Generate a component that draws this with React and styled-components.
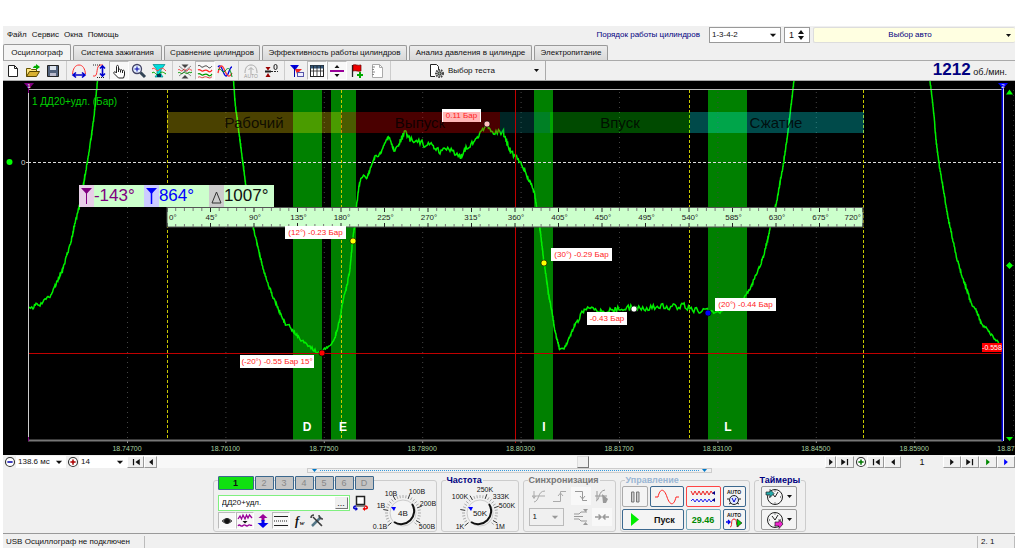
import React, { useState } from 'react';
import styled, { createGlobalStyle, css } from 'styled-components';

const GlobalStyle = createGlobalStyle`
	* {
		box-sizing: border-box;
	}
	body {
		margin: 0;
		background: #fff;
		color: #111;
		font-family: 'Liberation Sans', Arial, sans-serif;
		font-size: 9px;
		line-height: 12px;
	}
	button, input, select {
		font: inherit;
		color: inherit;
		margin: 0;
		padding: 0;
	}
	svg {
		display: block;
		flex: none;
	}
`;

const center = css`
	display: flex;
	align-items: center;
	justify-content: center;
`;

const Page = styled.div`
	margin: 26px 9px 0 3px;
	background: #f0f0f0;
`;

// Header
const MenuBar = styled.div`
	display: flex;
	align-items: center;
	height: 18px;
	gap: 3px;
`;
const Menu = styled.nav`
	display: flex;
	flex: 1;
	gap: 5px;
	padding-left: 4px;
`;
const MenuItem = styled.button`
	border: none;
	background: none;
	font-size: 8px;
`;
const OrderLabel = styled.label`
	color: #000080;
	font-size: 8px;
	margin-right: 6px;
`;
const SelectBox = styled.div`
	display: flex;
	align-items: center;
	width: ${({ $width }) => $width}px;
	height: ${({ $flat }) => ($flat ? 12 : 16)}px;
	padding: 0 2px;
	background: #fff;
	border: ${({ $flat }) => ($flat ? 'none' : '1px solid #999')};
`;
const Select = styled.select`
	flex: 1;
	min-width: 0;
	appearance: none;
	border: none;
	background: transparent;
	font-size: 8px;
	outline: none;
`;
const Spinner = styled.div`
	${center}
	width: 26px;
	height: 16px;
	padding: 0 4px;
	background: #fff;
	border: 1px solid #999;
`;
const SpinInput = styled.input`
	flex: 1;
	min-width: 0;
	border: none;
	outline: none;
`;
const CarButton = styled.button`
	display: flex;
	align-items: center;
	width: 202px;
	height: 16px;
	padding-right: 4px;
	background: #ffffe1;
	border: 1px solid #ddd;
	border-right: none;
	border-radius: 2px;
	color: #000080;
	font-size: 8px;
	span {
		flex: 1;
	}
`;
const Tabs = styled.div`
	display: flex;
	align-items: flex-end;
	gap: 2px;
	height: 16px;
`;
const Tab = styled.button`
	width: ${({ $width }) => $width}px;
	height: ${({ $active }) => ($active ? 16 : 15)}px;
	white-space: nowrap;
	font-size: 8px;
	border: 1px solid #999;
	border-bottom: none;
	border-radius: 2px 2px 0 0;
	background: ${({ $active }) => ($active ? '#f4f4f4' : 'linear-gradient(#ececec, #d8d8d8)')};
`;
const Toolbar = styled.div`
	display: flex;
	align-items: center;
	height: 21px;
	border-top: 1px solid #aaa;
	border-bottom: 1px solid #aaa;
`;
const ToolGroup = styled.div`
	display: flex;
	margin-right: 2px;
	padding-right: 3px;
	border-right: 1px solid #ccc;
`;
const Tool = styled.button`
	${center}
	width: ${({ $small }) => ($small ? 18 : 20)}px;
	height: ${({ $small }) => ($small ? 17 : 19)}px;
	border: 1px solid transparent;
	background: none;
	${({ $pressed }) => $pressed && css`
		background: #f8f8f8;
		border-color: #bbb #fff #fff #bbb;
	`}
`;
const TestButton = styled.button`
	display: flex;
	align-items: center;
	gap: 3px;
	width: 153px;
	height: 19px;
	padding: 0 6px 0 36px;
	border: none;
	border-right: 1px solid #aaa;
	background: none;
	font-size: 8px;
	span {
		flex: 1;
		text-align: left;
	}
`;
const Speed = styled.div`
	margin-left: auto;
	padding-right: 8px;
	b {
		color: #000080;
		font-size: 17px;
	}
`;

// Oscillogram
const ScopeBox = styled.div`
	position: relative;
`;
const TimeLabel = styled.text`
	fill: #a8d0a0;
	font-size: 7px;
	text-anchor: middle;
`;
const StrokeLabel = styled.text`
	fill: #000;
	fill-opacity: .8;
	font-size: 15px;
	text-anchor: middle;
`;
const Flag = styled.text`
	fill: #fff;
	font-size: 6px;
	text-anchor: middle;
`;
const ZeroLabel = styled.text`
	fill: #ccc;
	font-size: 8px;
`;
const ChannelLabel = styled.text`
	fill: #00d000;
	font-size: 10px;
`;
const Degree = styled.text`
	fill: #222;
	font-size: 8px;
`;
const Callout = styled.text`
	fill: #f22;
	font-size: 8px;
	text-anchor: middle;
`;
const Limit = styled.text`
	fill: #fff;
	font-size: 7px;
	text-anchor: middle;
`;
const ValveLabel = styled.text`
	fill: #fff;
	font-size: 12px;
	font-weight: bold;
	text-anchor: middle;
`;
const Readout = styled.div`
	position: absolute;
	left: 7.5%;
	top: 27.8%;
	display: flex;
	height: 22px;
	background: #cfc;
`;
const Cursor = styled.div`
	display: flex;
	align-items: center;
	width: 65px;
	color: ${({ $color }) => $color};
	font-size: 17px;
	svg {
		background: ${({ $tint }) => $tint};
	}
`;

// Texts inside icons and knobs
const IconText = styled.text`
	stroke: none;
	fill: #999;
	font-size: 5px;
	text-anchor: middle;
`;
const FxText = styled.text`
	stroke: none;
	fill: #111;
	font: italic bold ${({ $small }) => ($small ? 7 : 12)}px 'Liberation Serif', serif;
	text-anchor: middle;
`;
const AutoText = styled(IconText)`
	fill: #111;
	font-weight: bold;
`;
const KnobText = styled.text`
	fill: #111;
	font-size: 8px;
	text-anchor: middle;
`;
const KnobLabel = styled(KnobText)`
	font-size: 7px;
`;

// Navigation
const Navigation = styled.div`
	display: flex;
	align-items: center;
	height: 13px;
`;
const NavIcon = styled.button`
	${center}
	width: 13px;
	height: 12px;
	border: none;
	background: none;
`;
const NavButton = styled.button`
	${center}
	width: ${({ $width }) => $width}px;
	height: 12px;
	border: 1px solid;
	border-color: #fff #999 #999 #fff;
	background: #f0f0f0;
`;
const Scroll = styled.input`
	flex: 1;
	min-width: 0;
	height: 12px;
	appearance: none;
	background: #f8f8f8;
	&::-webkit-slider-thumb {
		appearance: none;
		width: 12px;
		height: 12px;
		background: #f0f0f0;
		border: 1px solid;
		border-color: #ddd #777 #777 #ddd;
	}
`;
const Frame = styled.div`
	width: 42px;
	text-align: center;
`;
const Splitter = styled.div`
	display: flex;
	align-items: center;
	gap: 3px;
	width: 405px;
	height: 5px;
	margin: 0 auto;
	padding: 0 4px;
	border: 1px solid #ccc;
`;
const Dots = styled.div`
	flex: 1;
	border-top: 1px dotted #39d;
`;

// Control panels
const Panels = styled.div`
	display: flex;
	justify-content: center;
	gap: 4px;
	height: 61px;
	padding: 2px 0 1px;
	border-bottom: 1px solid #999;
`;
const ChannelGroup = styled.div`
	display: flex;
	align-items: flex-end;
	width: 224px;
	margin-top: 5px;
	padding-left: 4px;
	border: 1px solid #ccc;
	border-radius: 3px;
`;
const Channel = styled.div`
	flex: 1;
	align-self: flex-start;
	margin-top: -5px;
`;
const ChannelButtons = styled.div`
	display: flex;
	gap: 1px;
	margin-right: -4px;
`;
const ChannelButton = styled.button`
	flex: ${({ $active }) => ($active ? 2 : 1)};
	height: 14px;
	border: 1px solid #3c688e;
	border-radius: 1px;
	background: ${({ $active }) => ($active ? '#10e010' : '#c4c4c4')};
	color: ${({ $active }) => ($active ? '#111' : '#888')};
	font-weight: ${({ $active }) => ($active ? 'bold' : 'normal')};
	line-height: 11px;
`;
const SensorRow = styled.div`
	display: flex;
	align-items: center;
	gap: 2px;
	margin-top: 5px;
`;
const Sensor = styled.div`
	display: flex;
	width: 132px;
	height: 16px;
	padding: 1px;
	background: #fff;
	border: 1px solid #80f080;
`;
const SensorInput = styled.input`
	flex: 1;
	min-width: 0;
	padding-left: 2px;
	border: none;
	outline: none;
	font-size: 8px;
`;
const More = styled.button`
	width: 13px;
	border: 1px solid;
	border-color: #eee #777 #777 #eee;
	background: #f0f0f0;
	line-height: 6px;
`;
const ChannelTools = styled.div`
	display: flex;
	margin-top: 1px;
`;
const Group = styled.fieldset`
	width: ${({ $width }) => $width}px;
	min-width: 0;
	margin: 0;
	padding: 0 1px;
	border: 1px solid #ccc;
	border-radius: 3px;
	legend {
		padding: 0 1px;
		margin-left: 3px;
		color: ${({ $color }) => $color || '#000080'};
		font-size: 9px;
		font-weight: bold;
		line-height: 10px;
	}
`;
const SyncGrid = styled.div`
	display: grid;
	grid-template-columns: repeat(4, 20px);
	gap: 3px 1px;
	padding: 2px 0 0 4px;
`;
const Sync = styled.button`
	${center}
	height: 18px;
	border: none;
	background: ${({ $light }) => ($light ? '#f8f8f8' : 'none')};
`;
const SyncSelect = styled.div`
	grid-column: span 2;
	display: flex;
	align-items: center;
	width: 35px;
	height: 18px;
	padding: 0 3px;
	border: 1px solid #bbb;
`;
const ControlGrid = styled.div`
	display: grid;
	grid-template-columns: 26px 34px 35px 23px;
	grid-auto-rows: 21px;
	gap: 2px;
	padding-top: 1px;
`;
const Control = styled.button`
	${center}
	border: 1px solid ${({ $border }) => $border || '#3c688e'};
	border-radius: 2px;
	background: #f4f4f4;
	color: ${({ $color }) => $color || '#111'};
	font-weight: bold;
`;
const Start = styled(Control)`
	grid-column: span 2;
	gap: 14px;
`;
const Timers = styled.div`
	display: grid;
	grid-auto-rows: 21px;
	gap: 2px;
	padding: 1px 7px 0 5px;
`;
const TimerButton = styled.button`
	${center}
	gap: 2px;
	border: 1px solid #999;
	border-radius: 2px;
	background: #f4f4f4;
`;
const Status = styled.footer`
	display: flex;
	height: 14px;
	padding-top: 2px;
`;
const StatusCell = styled.div`
	flex: ${({ $width }) => ($width ? 'none' : 1)};
	width: ${({ $width }) => ($width ? `${$width}px` : 'auto')};
	padding-left: 3px;
	border-right: 1px solid #bbb;
	font-size: 8px;
	white-space: nowrap;
`;

// Data
const menu = ['Файл', 'Сервис', 'Окна', 'Помощь'];

const tabs = [
	{ title: 'Осциллограф', width: 68 },
	{ title: 'Система зажигания', width: 89 },
	{ title: 'Сравнение цилиндров', width: 96 },
	{ title: 'Эффективность работы цилиндров', width: 145 },
	{ title: 'Анализ давления в цилиндре', width: 123 },
	{ title: 'Электропитание', width: 74 },
];

const trace = [
	[[29, 307], [33, 307.5], [36, 303], [39, 305.5], [45, 300], [51, 295.5], [55, 286.5], [59.5, 276.5], [62.5, 270], [67, 255],
		[71, 242], [75, 223], [79, 208], [84, 182], [88, 158], [91.5, 135], [94, 117], [97.5, 81]],
	[[233.5, 81], [235.5, 107], [239, 133], [242.5, 160], [245.5, 183], [249.5, 207], [253.5, 228], [258.5, 250], [263, 268],
		[267, 281.5], [273.5, 298], [280, 312.5], [285.5, 325], [287.5, 324], [293.5, 331.5], [300, 339], [307, 344], [313, 349],
		[317, 352], [321.5, 352.5], [328.5, 346], [333.5, 341], [337, 331], [340, 318], [343, 300], [347, 285], [350, 269],
		[352.5, 241.5], [354.5, 226], [356.5, 206], [359, 186.5], [361, 177], [363.5, 175.5], [366.5, 178], [370, 170],
		[375, 156.5], [379.5, 155], [383.5, 146.5], [388.5, 136.5], [390.5, 141.5], [394, 150.5], [398.5, 146.5], [401, 139.5],
		[405, 132.5], [410, 140], [420, 141.5], [425, 145], [430.5, 141.5], [434, 147.5], [440, 152], [446.5, 148.5],
		[453.5, 152], [460.5, 156.5], [465, 150], [470, 145], [476.5, 139], [482.5, 130], [487.5, 125], [493.5, 131.5],
		[503.5, 132.5], [506.5, 141.5], [511.5, 153.5], [516.5, 157.5], [521, 162.5], [526.5, 175], [531.5, 185], [534.5, 193.5],
		[536.5, 206.5], [540, 228.5], [544, 262.5], [548.5, 293.5], [552.5, 315], [555, 331.5], [559.5, 348.5], [564, 349],
		[568.5, 340], [575, 323.5], [585, 310], [593, 309], [598, 312], [610, 311], [623, 307.5], [640, 308.5], [660, 306.5],
		[680, 307], [683, 304.5], [688.5, 308.5], [696.5, 310.5], [710, 310], [720, 311.5], [735, 306], [745, 296.5],
		[751.5, 286.5], [755, 276.5], [759, 268.5], [763.5, 256.5], [768.5, 236.5], [771.5, 220], [776.5, 203], [780.5, 180],
		[784, 160], [787.5, 135], [790.5, 110], [794, 81]],
	[[930, 81], [933.5, 110], [936, 140], [939.5, 166.5], [943.5, 190], [947.5, 215], [951.5, 233.5], [956, 255], [959.5, 268],
		[965, 285], [971.5, 303.5], [976.5, 311.5], [981.5, 323.5], [988.5, 331], [995, 340], [999, 343.5]],
];

const noise = (n) => {
	const v = Math.sin(n * 12.9898) * 43758.5453;
	return (v - Math.floor(v)) * 2 - 1;
};

const amplitude = (x) => {
	if (x > 398 && x < 520) return 3;
	if (x > 578 && x < 725) return 3;
	return 1.6;
};

const toPath = (points) => {
	let d = `M${points[0].join(' ')}`;
	for (let i = 1; i < points.length; i++) {
		const [x0, y0] = points[i - 1];
		const [x1, y1] = points[i];
		const steps = Math.max(1, Math.round(Math.hypot(x1 - x0, y1 - y0) / 1.3));
		for (let s = 1; s <= steps; s++) {
			const x = x0 + ((x1 - x0) * s) / steps;
			const y = y0 + ((y1 - y0) * s) / steps + noise(x + s) * amplitude(x);
			d += `L${x.toFixed(1)} ${y.toFixed(1)}`;
		}
	}
	return d;
};

const valves = [
	{ name: 'D', x: 293, width: 29, label: 307 },
	{ name: 'E', x: 331, width: 25, label: 343 },
	{ name: 'I', x: 534, width: 19, label: 544 },
	{ name: 'L', x: 708, width: 39, label: 728 },
];

const strokes = [
	{ x: 167, width: 174, fill: '#ffe000', name: 'Рабочий', label: 254 },
	{ x: 341, width: 159, fill: '#f00', name: 'Выпуск', label: 420 },
	{ x: 500, width: 50, fill: '#008080' },
	{ x: 550, width: 140, fill: '#0f0', name: 'Впуск', label: 620 },
	{ x: 690, width: 174, fill: '#0ff', name: 'Сжатие', label: 776 },
];

const times = ['18.74700', '18.76100', '18.77500', '18.78900', '18.80300', '18.81700', '18.83100', '18.84500', '18.85900'];

const callouts = [
	{ x: 442, y: 109, width: 39, text: '0.11 Бар', cx: 487, cy: 124, color: '#ffc0c0', fill: '#ffb8b8' },
	{ x: 285, y: 226, width: 61, text: '(12°) -0.23 Бар', cx: 353, cy: 241, color: '#ff0' },
	{ x: 551, y: 248, width: 61, text: '(30°) -0.29 Бар', cx: 544, cy: 263, color: '#ff0' },
	{ x: 587, y: 312, width: 40, text: '-0.43 Бар', cx: 634, cy: 309, color: '#fff' },
	{ x: 715, y: 298, width: 61, text: '(20°) -0.44 Бар', cx: 708, cy: 313, color: '#00f' },
	{ x: 240, y: 355, width: 74, text: '(-20°) -0.55 Бар 15°', cx: 322, cy: 353, color: '#f00' },
];

const Scope = () => (
	<ScopeBox>
		<svg width="100%" viewBox="3 81 1012 374">
			<rect x="3" y="81" width="1012" height="374" fill="#000" />
			{valves.map(v => <rect key={v.name} x={v.x} y="90" width={v.width} height="350" fill="#008000" />)}
			{times.map((t, i) => (
				<g key={t}>
					<path d={`M${127.5 + i * 98.4} 92V440`} stroke="#444" strokeDasharray="1 4" />
					<path d={`M${127.5 + i * 98.4} 440v3`} stroke="#999" />
					<TimeLabel x={127 + i * 98.4} y="451">{t}</TimeLabel>
				</g>
			))}
			<TimeLabel x="1006" y="451">18.87</TimeLabel>
			<path d="M1013.5 90V440" stroke="#333" strokeDasharray="1 4" />
			<path d="M28 162.5H1003" stroke="#ddd" strokeDasharray="3 2" />
			<path d="M167.5 90V440M341.5 90V440M689.5 90V440M863.5 90V440" stroke="#c8c800" strokeDasharray="3 2" />
			{trace.map((part, i) => <path key={i} d={toPath(part)} fill="none" stroke="#00f000" strokeWidth="1.5" />)}
			{strokes.map(s => (
				<g key={s.x}>
					<rect x={s.x} y="112" width={s.width} height="21" fill={s.fill} opacity=".29" />
					{s.name && <StrokeLabel x={s.label} y="128">{s.name}</StrokeLabel>}
				</g>
			))}
			<path d="M28 353.5H1003M515.5 90V443" stroke="#c00000" />
			<path d="M28 89.5H1003" stroke="#bbb" />
			<path d="M28.5 90V440" stroke="#ccc" />
			<path d="M28 440.5H1003" stroke="#777" strokeWidth="2" />
			<path d="M1002.5 88V441" stroke="#0000e0" strokeWidth="2" />
			<path d="M1003.5 88V441" stroke="#ddf" />
			<path d="M24 83h10l-5 6z" fill="#800080" />
			<path d="M28.5 88v5M28.5 437v4" stroke="#800080" />
			<path d="M998 83h10l-5 6z" fill="#00f" />
			<Flag x="29" y="88">1</Flag>
			<Flag x="1003" y="88">2</Flag>
			<path d="M1009.5 89.5l3.5 5h-7zM1009.5 441l3.5-4h-7zM1009.5 262l3.5 3.5-3.5 3.5-3.5-3.5z" fill="#0f0" />
			<circle cx="9.5" cy="162" r="3" fill="#0f0" />
			<ZeroLabel x="21" y="165">0</ZeroLabel>
			<path d="M26 162.5h3" stroke="#ccc" />
			<ChannelLabel x="32" y="105">1 ДД20+удл. (Бар)</ChannelLabel>

			<rect x="167" y="207.5" width="696" height="19.5" fill="#cfc" stroke="#555" />
			{Array.from({ length: 81 }, (_, i) => {
				const long = i % 5 === 0;
				const x = 167 + i * 8.7;
				return <path key={i} d={`M${x} 208v${long ? 4 : 3}M${x} 227v-${long ? 4 : 3}`} stroke={long ? '#222' : '#777'} />;
			})}
			{Array.from({ length: 17 }, (_, i) => (
				<Degree key={i} x={i === 0 ? 169 : i === 16 ? 861 : 168 + i * 43.5} y="220"
					textAnchor={i === 0 ? 'start' : i === 16 ? 'end' : 'middle'}>{i * 45}°</Degree>
			))}

			{callouts.map(c => (
				<g key={c.text}>
					<rect x={c.x} y={c.y} width={c.width} height="13" fill="#fff" />
					{c.fill && <rect x={c.x + 1} y={c.y + 3} width={c.width - 2} height="10" fill={c.fill} />}
					<Callout x={c.x + c.width / 2} y={c.y + 9}>{c.text}</Callout>
					<circle cx={c.cx} cy={c.cy} r="3" fill={c.color} stroke="#000" strokeWidth=".6" />
				</g>
			))}
			<rect x="982" y="343" width="20" height="9" fill="#f00" />
			<Limit x="992" y="350">-0.558</Limit>
			{valves.map(v => <ValveLabel key={v.name} x={v.label} y="431">{v.name}</ValveLabel>)}
		</svg>
		<Readout>
			<Cursor $tint="#e8cfe8" $color="#800080">
				<svg width="15" height="22" viewBox="0 0 15 22"><path d="M2 3h11L7.5 9z" fill="#800080" /><path d="M7.5 6v13" stroke="#800080" /></svg>
				-143°
			</Cursor>
			<Cursor $tint="#ccf" $color="#00f">
				<svg width="15" height="22" viewBox="0 0 15 22"><path d="M2 3h11L7.5 9z" fill="#00f" /><path d="M7.5 6v13" stroke="#00f" strokeWidth="1.5" /></svg>
				864°
			</Cursor>
			<Cursor $tint="#ccc" $color="#111">
				<svg width="15" height="22" viewBox="0 0 15 22"><path d="M7.5 7L12 18H3z" fill="none" stroke="#333" /></svg>
				1007°
			</Cursor>
		</Readout>
	</ScopeBox>
);

// Icons
const Icon = ({ children, size = 16 }) => (
	<svg width={size} height={size} viewBox="0 0 16 16" fill="none" stroke="#222">{children}</svg>
);

const icons = {
	create: <Icon><path d="M3.5 2.5h6l3 3v8h-9z" fill="#fff" /><path d="M9.5 2.5v3h3" /></Icon>,
	open: <Icon><path d="M1.5 13.5v-8h4l1 1h5v2" fill="#ffe680" stroke="#665500" /><path d="M1.5 13.5l3-5h10l-3 5z" fill="#d8b030" stroke="#554400" /><path d="M8 5c1-3 3-2 3-2V1l4 3-4 3V5z" fill="#0a0" stroke="none" /></Icon>,
	save: <Icon><path d="M2.5 2.5h11v11h-11z" fill="#52627c" /><path d="M5 3h6v4H5z" fill="#dde4ee" stroke="none" /><path d="M5 10h6v3H5z" fill="#bbc" stroke="none" /></Icon>,
	period: <Icon><path d="M1.5 11C2 6 4 2 8 2s6 4 6.5 9" stroke="#f33" /><path d="M2 12h12M5 9.5L2 12l3 2.5M11 9.5l3 2.5-3 2.5" stroke="#00c" strokeWidth="1.6" /></Icon>,
	swing: <Icon><path d="M2 13h2C7 12 5 3 9 2h3" stroke="#f33" /><path d="M2 2h7M6 14.5h8" strokeDasharray="1 1" /><path d="M11.5 3v10M9 5.5L11.5 3 14 5.5M9 10.5l2.5 2.5 2.5-2.5" stroke="#00c" strokeWidth="1.6" /></Icon>,
	hand: <Icon><path d="M5.5 9V3.5c0-1.5 2-1.5 2 0V7c0-1.5 2-1 2 .5 0-1.3 2-1 2 .5 0-1.2 2-1 2 .5V12l-1 3h-5L3 10.5c-1-1.5 1-2.5 2.5-.5zM7.5 7v2M9.5 7.5V9.5M11.5 8v2" fill="#fff" /></Icon>,
	zoom: <Icon><circle cx="6" cy="6" r="4.5" fill="#e4f0ff" stroke="#446" strokeWidth="1.3" /><path d="M6 3.5v5M3.5 6h5" stroke="#00a" /><path d="M9.5 9.5L14 14" stroke="#345" strokeWidth="3" /></Icon>,
	filter: <Icon><path d="M2 1.5h12L10 7v4l2 3H4l2-3V7z" fill="#0dd" stroke="#088" strokeWidth=".7" /><path d="M1 6c3-3 4 4 7 1s4-2 7 1" stroke="#f44" /><path d="M1 10c3-3 4 4 7 1s4-2 7 0" stroke="#0a0" /><path d="M6 11h4v3H6z" fill="#035" stroke="none" /></Icon>,
	collapse: <Icon><path d="M1 7c2-2 3 3 5 0s3 3 5 0 2 1 4 0" stroke="#e33" /><path d="M1 10c2-2 3 2 5 0s3 2 5 0 2 1 4-1" stroke="#090" /><path d="M8 5L4.5 1.5h7zM8 12l-3.5 3.5h7z" fill="#444" stroke="none" /><path d="M2 3l12 10M14 3L2 13" strokeWidth=".5" /></Icon>,
	waves: <Icon><path d="M1 3c2-2 3 2 5 1s3-2 5 0 3 0 4-1" stroke="#333" /><path d="M1 7c2-2 3 2 5 1s3-2 5 0 3 0 4-1" stroke="#f22" strokeWidth="1.2" /><path d="M1 11c2-2 3 2 5 1s3-2 5 0 3 0 4-1" stroke="#090" strokeWidth="1.2" /><path d="M1 14.5c2-2 3 1 5 0s3-1 5 0 3 0 4-1" stroke="#d33" /></Icon>,
	overlay: <Icon><path d="M1 4c4-5 5 9 8 9s3-9 6-9" stroke="#00d" strokeWidth="1.3" /><path d="M1 10c2-9 4-9 7-2s5 6 7 2" stroke="#f33" strokeWidth="1.3" /><path d="M1 7c3-4 4 5 7 1s5-4 7 6" stroke="#092" /></Icon>,
	auto: <Icon><path d="M2 10C2 5 4 2 8 2s6 3 6 8M8 11V5M5.5 7L8 4.5 10.5 7" stroke="#aaa" /><IconText x="8" y="15">AUTO</IconText></Icon>,
	zero: <Icon><path d="M2 8.5h6" strokeWidth="2" /><path d="M8 8.5h7" strokeDasharray="2 1" /><path d="M5 7.5L2.5 4h5zM5 10l-2.5 4h5z" fill="#900" stroke="none" /><rect x="11" y="1.5" width="3" height="5" rx="1.5" /></Icon>,
	flags: <Icon><path d="M1 2h9L6 7.5z" fill="#00d" stroke="none" /><path d="M5.5 3v11" stroke="#00a" /><path d="M6 6h7L8 11z" fill="#e22" stroke="none" /><rect x="8.5" y="9.5" width="6" height="4" fill="#eef" stroke="#55a" /></Icon>,
	table: <Icon><rect x="1.5" y="2.5" width="13" height="11" fill="#fff" /><path d="M1.5 4h13" stroke="#357" strokeWidth="3" /><path d="M4.5 3v10M8 3v10M11.5 3v10M2 8h12" strokeWidth=".8" /></Icon>,
	split: <Icon><path d="M1 8h14" stroke="#909" strokeWidth="2" /><path d="M8 2l2.5 3h-5zM8 14l2.5-3h-5z" fill="#111" stroke="none" /></Icon>,
	flag: <Icon><path d="M3.5 2v12" strokeWidth="1.3" /><path d="M4 2c3-1 4 1 8 0v6c-3 1-5-1-8 0z" fill="#e00" stroke="#600" strokeWidth=".7" /><path d="M11 9v6M8 12h6" stroke="#0a0" strokeWidth="2" /></Icon>,
	report: <Icon><path d="M3.5 1.5h7l3 3v10h-10z" fill="#fff" stroke="#aaa" /><path d="M3 4h3M3 6.5h2M3 9h3M3 11.5h2" stroke="#888" /><path d="M10.5 1.5v3h3" stroke="#aaa" /></Icon>,
	test: <Icon><path d="M6 13.5H1.5v-12h6l2 2V7" fill="#fff" /><circle cx="10.5" cy="10.5" r="3.5" fill="#ccc" stroke="#444" strokeWidth="2" strokeDasharray="1.5 1" /><circle cx="10.5" cy="10.5" r="1.6" fill="#9a9" /></Icon>,
	eye: <Icon><path d="M3 8c3-3 7-3 10 0-3 3-7 3-10 0z" fill="#777" stroke="#555" /><circle cx="8" cy="8" r="2.5" fill="#111" /></Icon>,
	smooth: <Icon><path d="M1 6l2-3 1.5 3L6 2l2 4 1.5-4L11 5l1.5-3L15 5" stroke="#909" strokeWidth="1.3" /><path d="M1 13c2-3 3 2 5-.5s3 2 5 0 2 1 4-.5" stroke="#909" strokeWidth="1.3" /><path d="M5.5 8h5L8 10.5z" fill="#111" stroke="none" /></Icon>,
	shift: <Icon><path d="M8 3v5" stroke="#909" strokeWidth="3" /><path d="M8 1l4.5 4h-9z" fill="#909" stroke="none" /><path d="M8 7v5" stroke="#00e" strokeWidth="3" /><path d="M2.5 10h11L8 15z" fill="#00e" stroke="none" /></Icon>,
	levels: <Icon><path d="M1 3.5h14M1 12.5h14" /><path d="M1 8h14" strokeDasharray="1 1" /></Icon>,
	formula: <Icon><FxText x="6" y="12">f</FxText><FxText x="11" y="12" $small>w</FxText></Icon>,
	tools: <Icon><path d="M3 13L12 4" strokeWidth="2.5" stroke="#578" /><path d="M4 4l8 8" strokeWidth="1.5" stroke="#333" /><path d="M10 2c0 3 1 4 4 4M2 5c0-2 1-3 3-3M11 11l2 2" stroke="#444" strokeWidth="1.5" /></Icon>,
	sensor: <Icon><rect x="4.5" y="1.5" width="8" height="8" fill="#fff" strokeWidth="1.5" /><path d="M4 11h9" /><path d="M4 11c-3 0-3 3 0 3" stroke="#00c" strokeWidth="1.5" /><path d="M13 11c3 0 3 3 0 3" stroke="#e00" strokeWidth="1.5" /><path d="M3.5 11.5L6 14l-2.5 2z" fill="#00c" stroke="none" /><path d="M13 11.5L10.5 14l2.5 2z" fill="#e00" stroke="none" /></Icon>,
	syncSlope: <Icon><path d="M3 14C9 13 6 3 14 3M1 8h13M3 3v7M1.5 8L3 10.5 4.5 8" stroke="#aaa" /></Icon>,
	syncRise: <Icon><path d="M1 13.5h7.5V3.5H14M6 8l2.5-3L11 8" stroke="#aaa" /></Icon>,
	syncFall: <Icon><path d="M2 3.5h7.5v9H14M7 8l2.5 3L12 8" stroke="#999" /></Icon>,
	syncHand: <Icon><path d="M1 8h12M2 13C6 12 4 3 11 2M3 3v9" stroke="#999" /><path d="M8 6l6 5-2 4H9z" fill="#999" stroke="none" /></Icon>,
	syncLevel: <Icon><path d="M1 5h5l2-2h6M1 10h5l2 2h6M1 7.5h9" stroke="#999" /><path d="M10 0h5l-2.5 3zM10 16h5l-2.5-3z" fill="#999" stroke="none" /></Icon>,
	syncCenter: <Icon><path d="M1 8h6M4.5 5.5L7 8l-2.5 2.5M15 8H9M11.5 5.5L9 8l2.5 2.5" stroke="#999" strokeWidth="1.5" /></Icon>,
	pause: <Icon><path d="M4.5 3v10h2.5V3zM9.5 3v10H12V3z" fill="#ccc" stroke="#777" /></Icon>,
	minus: <Icon size={12}><circle cx="8" cy="8" r="6" fill="#fff" stroke="#333" strokeWidth="1.5" /><path d="M4.5 8h7" stroke="#00a" strokeWidth="2" /></Icon>,
	plus: <Icon size={12}><circle cx="8" cy="8" r="6" fill="#fff" stroke="#333" strokeWidth="1.5" /><path d="M4.5 8h7M8 4.5v7" stroke="#a00" strokeWidth="2" /></Icon>,
	target: <Icon size={12}><circle cx="8" cy="8" r="6" fill="#fff" stroke="#333" strokeWidth="1.5" /><path d="M4.5 8h7M8 4.5v7" stroke="#070" strokeWidth="2" /></Icon>,
};

const arrows = {
	next: 'M5 3l6 5-6 5z',
	prev: 'M11 3L5 8l6 5z',
	last: 'M2 3l7 5-7 5zM11 3h2v10h-2z',
	first: 'M14 3L7 8l7 5zM3 3h2v10H3z',
	down: 'M3 6h10l-5 5z',
};

const Arrow = ({ kind, color = '#111' }) => (
	<svg width="10" height="10" viewBox="0 0 16 16"><path d={arrows[kind]} fill={color} /></svg>
);

const SmallArrow = ({ color = '#111' }) => (
	<svg width="5" height="3" viewBox="0 0 5 3"><path d="M0 0h5L2.5 3z" fill={color} /></svg>
);

const toolbar = [
	['create', 'open', 'save'],
	['period', 'swing', 'hand', 'zoom', 'filter'],
	['collapse', 'waves', 'overlay'],
	['auto', 'zero'],
	['flags', 'table', 'split', 'flag', 'report'],
];
const channelTools = ['eye', 'smooth', 'shift', 'levels', 'formula', 'tools'];
const pressed = ['hand', 'waves', 'table', 'split', 'eye', 'smooth', 'levels'];

const Knob = ({ value, labels, cx, width }) => (
	<svg width={width} height="46" viewBox={`0 0 ${width} 46`}>
		{Array.from({ length: 27 }, (_, i) => {
			const a = ((i * 10 + 140) * Math.PI) / 180;
			const end = i % 5 === 0 ? 20 : 18;
			return <path key={i} d={`M${cx + Math.cos(a) * 15} ${28 + Math.sin(a) * 15}L${cx + Math.cos(a) * end} ${28 + Math.sin(a) * end}`} stroke={i % 5 === 0 ? '#333' : '#aaa'} />;
		})}
		<circle cx={cx} cy="28" r="13" fill="#f4f4f4" stroke="#ccc" />
		<path d={`M${cx + 9} 19A13 13 0 0 1 ${cx - 9} 37`} fill="none" stroke="#111" strokeWidth="2" />
		<path d={`M${cx - 12} 22h5l-2 4z`} fill="#00f" />
		<KnobText x={cx} y="31">{value}</KnobText>
		{labels.map(([text, x, y]) => <KnobLabel key={text} x={x} y={y}>{text}</KnobLabel>)}
	</svg>
);

const Timer = ({ fill, arrow }) => (
	<svg width="20" height="18" viewBox="0 0 20 18" fill="none" stroke="#222">
		<circle cx="10" cy="9" r="7.5" fill="#f6f6f6" />
		<path d="M10 9l3-5M10 9L7 5M10 2.5v1M10 14.5v1M4 9h1M15 9h1" />
		<path d={arrow} fill={fill} strokeWidth=".7" />
	</svg>
);

const App = () => {
	const [channel, setChannel] = useState('1');
	const [position, setPosition] = useState(64);

	return (
		<Page>
			<GlobalStyle />
			<MenuBar>
				<Menu>
					{menu.map(item => <MenuItem key={item}>{item}</MenuItem>)}
				</Menu>
				<OrderLabel htmlFor="order">Порядок работы цилиндров</OrderLabel>
				<SelectBox $width={72}>
					<Select id="order"><option>1-3-4-2</option></Select>
					<Arrow kind="down" />
				</SelectBox>
				<Spinner>
					<SpinInput aria-label="Цилиндр" defaultValue="1" />
					<svg width="8" height="12" viewBox="0 0 8 12"><path d="M4 1l3 4H1zM4 11l3-4H1z" fill="#111" /></svg>
				</Spinner>
				<CarButton>
					<span>Выбор авто</span>
					<SmallArrow />
				</CarButton>
			</MenuBar>

			<Tabs role="tablist">
				{tabs.map((tab, index) => (
					<Tab key={tab.title} role="tab" aria-selected={index === 0} $active={index === 0} $width={tab.width}>{tab.title}</Tab>
				))}
			</Tabs>

			<Toolbar>
				{toolbar.map((group, index) => (
					<ToolGroup key={index}>
						{group.map(name => (
							<Tool key={name} aria-label={name} $pressed={pressed.includes(name)}>{icons[name]}</Tool>
						))}
					</ToolGroup>
				))}
				<TestButton>
					{icons.test}
					<span>Выбор теста</span>
					<SmallArrow />
				</TestButton>
				<Speed><b>1212</b> об./мин.</Speed>
			</Toolbar>

			<Scope />

			<Navigation>
				<NavIcon aria-label="Сжать">{icons.minus}</NavIcon>
				<SelectBox $width={50} $flat>
					<Select aria-label="Развертка"><option>138.6 мс</option></Select>
					<Arrow kind="down" />
				</SelectBox>
				<NavIcon aria-label="Растянуть">{icons.plus}</NavIcon>
				<SelectBox $width={48} $flat>
					<Select aria-label="Масштаб"><option>14</option></Select>
					<Arrow kind="down" />
				</SelectBox>
				<NavButton $width={17} aria-label="В начало"><Arrow kind="first" /></NavButton>
				<NavButton $width={13} aria-label="Назад"><Arrow kind="prev" /></NavButton>
				<Scroll type="range" min="0" max="100" aria-label="Позиция" value={position} onChange={e => setPosition(e.target.value)} />
				<NavButton $width={11} aria-label="Вперед"><Arrow kind="next" /></NavButton>
				<NavButton $width={18} aria-label="В конец"><Arrow kind="last" /></NavButton>
				<NavIcon aria-label="Метка">{icons.target}</NavIcon>
				<NavButton $width={17} aria-label="Первый кадр"><Arrow kind="first" /></NavButton>
				<NavButton $width={17} aria-label="Предыдущий кадр"><Arrow kind="prev" /></NavButton>
				<Frame>1</Frame>
				<NavButton $width={18} aria-label="Следующий кадр"><Arrow kind="next" /></NavButton>
				<NavButton $width={18} aria-label="Последний кадр"><Arrow kind="last" /></NavButton>
				<NavButton $width={18} aria-label="Воспроизвести"><Arrow kind="next" color="#080" /></NavButton>
				<NavButton $width={18} aria-label="Продолжить"><Arrow kind="next" color="#00f" /></NavButton>
			</Navigation>

			<Splitter>
				<SmallArrow color="#0078c8" />
				<Dots />
				<SmallArrow color="#0078c8" />
			</Splitter>

			<Panels>
				<ChannelGroup>
					<Channel>
						<ChannelButtons>
							{['1', '2', '3', '4', '5', '6', 'D'].map(name => (
								<ChannelButton key={name} $active={channel === name} onClick={() => setChannel(name)}>{name}</ChannelButton>
							))}
						</ChannelButtons>
						<SensorRow>
							<Sensor>
								<SensorInput aria-label="Датчик" defaultValue="ДД20+удл." />
								<More aria-label="Выбрать датчик">...</More>
							</Sensor>
							{icons.sensor}
						</SensorRow>
						<ChannelTools>
							{channelTools.map(name => (
								<Tool key={name} aria-label={name} $small $pressed={pressed.includes(name)}>{icons[name]}</Tool>
							))}
						</ChannelTools>
					</Channel>
					<Knob value="4В" cx={33} width={66} labels={[['0.1В', 10, 44], ['1В', 11, 23], ['10В', 21, 11], ['100В', 47, 9], ['200В', 58, 21], ['500В', 57, 44]]} />
				</ChannelGroup>

				<Group $width={78}>
					<legend>Частота</legend>
					<Knob value="50K" cx={37} width={74} labels={[['1K', 17, 44], ['100K', 17, 14], ['250K', 42, 7], ['333K', 58, 14], ['500K', 64, 23], ['1M', 57, 44]]} />
				</Group>

				<Group $width={93} $color="#777">
					<legend>Синхронизация</legend>
					<SyncGrid>
						<Sync aria-label="Фронт">{icons.syncSlope}</Sync>
						<Sync aria-label="По нарастанию">{icons.syncRise}</Sync>
						<Sync aria-label="По спаду" $light>{icons.syncFall}</Sync>
						<Sync aria-label="Вручную">{icons.syncHand}</Sync>
						<SyncSelect>
							<Select aria-label="Канал синхронизации"><option>1</option></Select>
							<Arrow kind="down" color="#999" />
						</SyncSelect>
						<Sync aria-label="Уровень">{icons.syncLevel}</Sync>
						<Sync aria-label="Центр" $light>{icons.syncCenter}</Sync>
					</SyncGrid>
				</Group>

				<Group $width={130} $color="#9ab6d4">
					<legend>Управление</legend>
					<ControlGrid>
						<Control $border="#aaa" aria-label="Пауза">{icons.pause}</Control>
						<Control aria-label="Однократно">
							<svg width="26" height="18" viewBox="0 0 26 18"><path d="M1 9h3C6 0 10 0 13 9s7 9 9 0h3" fill="none" stroke="#f22" /></svg>
						</Control>
						<Control $border="#f44" aria-label="Непрерывно">
							<svg width="26" height="18" viewBox="0 0 26 18" fill="none">
								<path d="M1 3l2 4 2-4 2 4 2-4 2 4 2-4 2 4 2-4 2 4 2-4 2 3" stroke="#e22" />
								<path d="M1 13l2-2 2 3 2-3 2 3 2-3 2 3 2-3 2 3 2-3 2 3 2-2" stroke="#22e" />
								<path d="M25 3v4l-3-2zM25 10v4l-3-2z" fill="#008" />
							</svg>
						</Control>
						<Control aria-label="Автоподстройка">
							<svg width="18" height="18" viewBox="0 0 18 18" fill="none" stroke="#222">
								<AutoText x="9" y="6">AUTO</AutoText>
								<circle cx="9" cy="12" r="4.5" fill="#dfe8ff" />
								<path d="M7 10l2 4 2-4" stroke="#00c" />
								<path d="M2 11h2M14 11h2M4 16l2-1M14 16l-2-1" />
							</svg>
						</Control>
						<Start>
							<svg width="10" height="13" viewBox="0 0 10 13"><path d="M1 0l8 6.5L1 13z" fill="#0e0" /></svg>
							<span>Пуск</span>
						</Start>
						<Control $border="#7ab" $color="#080">29.46</Control>
						<Control aria-label="Автозапуск">
							<svg width="18" height="18" viewBox="0 0 18 18" fill="none">
								<AutoText x="9" y="6">AUTO</AutoText>
								<path d="M1 11h4M3 9l2 2-2 2" stroke="#00e" strokeWidth="1.3" />
								<path d="M5 16c3 0 0-8 4-8s1 8 5 7" stroke="#e22" />
								<path d="M12 8l5 4-5 4z" fill="#0c0" stroke="#111" strokeWidth=".6" />
							</svg>
						</Control>
					</ControlGrid>
				</Group>

				<Group $width={52}>
					<legend>Таймеры</legend>
					<Timers>
						<TimerButton aria-label="Таймер запуска">
							<Timer fill="#2aa" arrow="M1 4h4V1.5L9 5.5 5 9.5V7H1z" />
							<SmallArrow />
						</TimerButton>
						<TimerButton aria-label="Таймер остановки">
							<Timer fill="#e2c" arrow="M10 11h4V8.5l4 4.5-4 4.5V15h-4z" />
							<SmallArrow />
						</TimerButton>
					</Timers>
				</Group>
			</Panels>

			<Status>
				<StatusCell $width={142}>USB Осциллограф не подключен</StatusCell>
				<StatusCell />
				<StatusCell $width={37}>2. 1</StatusCell>
			</Status>
		</Page>
	);
};

export default App;
